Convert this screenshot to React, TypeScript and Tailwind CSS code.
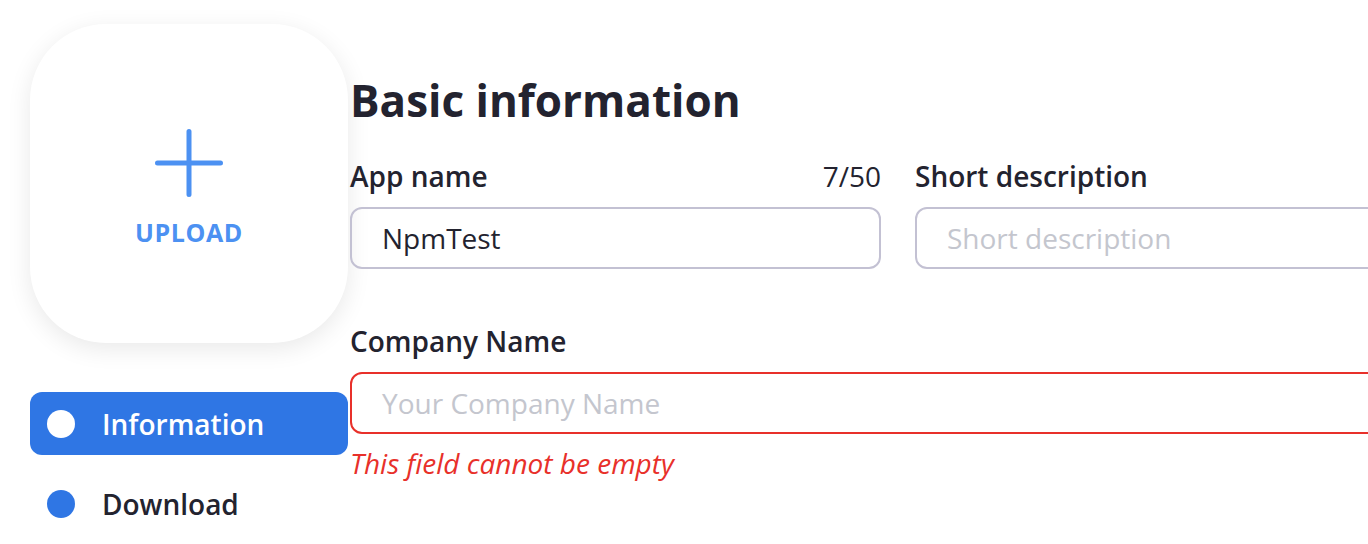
const font = { fontFamily: '"Open Sans", "Noto Sans", sans-serif' };

function PlusIcon() {
  return (
    <svg width="68" height="68" viewBox="0 0 68 68" fill="none" className="text-[#4c91f2]">
      <path d="M34 2.5V65.5M2.5 34H65.5" stroke="currentColor" strokeWidth="5" strokeLinecap="round" />
    </svg>
  );
}

function NavItem({ label, active }: { label: string; active?: boolean }) {
  return (
    <div
      className={
        active
          ? "flex items-center h-[63px] rounded-[12px] bg-[#2f76e4] pl-[17px]"
          : "flex items-center h-[63px] rounded-[12px] pl-[17px]"
      }
    >
      <span
        className={
          active
            ? "w-[28px] h-[28px] rounded-full bg-white shrink-0"
            : "w-[28px] h-[28px] rounded-full bg-[#2f76e4] shrink-0"
        }
      />
      <span
        className={
          active
            ? "ml-[27px] text-[28px] font-semibold text-white"
            : "ml-[27px] text-[28px] font-semibold text-[#23232f]"
        }
      >
        {label}
      </span>
    </div>
  );
}

function Field({
  label,
  value,
  placeholder,
  counter,
  error,
}: {
  label: string;
  value?: string;
  placeholder?: string;
  counter?: string;
  error?: string;
}) {
  return (
    <div className="flex flex-col">
      <div className="flex items-center justify-between leading-[36px] mb-[13px]">
        <span className="text-[28px] font-semibold text-[#23232f]">{label}</span>
        {counter && <span className="text-[28px] text-[#23232f]">{counter}</span>}
      </div>
      <div
        className={
          error
            ? "h-[62px] rounded-[12px] border-2 border-[#e8302a] flex items-center pl-[30px]"
            : "h-[62px] rounded-[12px] border-2 border-[#c3c1d3] flex items-center pl-[30px]"
        }
      >
        {value ? (
          <span className="text-[28px] text-[#23232f]">{value}</span>
        ) : (
          <span className="text-[28px] text-[#c4c6ce]">{placeholder}</span>
        )}
      </div>
      {error && (
        <p className="mt-[11px] text-[28px] italic text-[#e8302a] leading-[36px]">{error}</p>
      )}
    </div>
  );
}

export default function App() {
  return (
    <div className="w-[1368px] h-[544px] overflow-hidden bg-white" style={font}>
      <div className="flex pl-[30px] pt-[24px]">
        {/* Left column */}
        <div className="w-[318px] shrink-0 flex flex-col">
          <div className="h-[319px] rounded-[76px] bg-white shadow-[0_6px_24px_rgba(0,0,0,0.09)] flex flex-col items-center justify-center">
            <div className="mt-[10px]">
              <PlusIcon />
            </div>
            <span className="mt-[18px] text-[25px] leading-[34px] font-bold tracking-[0.6px] text-[#4c91f2]">
              UPLOAD
            </span>
          </div>
          <div className="mt-[49px] flex flex-col gap-[17px]">
            <NavItem label="Information" active />
            <NavItem label="Download" />
          </div>
        </div>

        {/* Main */}
        <div className="ml-[2px] pt-[46px] shrink-0">
          <h1 className="text-[44px] font-bold leading-[60px] text-[#23232f]">Basic information</h1>
          <div className="mt-[28px] grid grid-cols-[531px_531px] gap-x-[34px] gap-y-[54px]">
            <Field label="App name" value="NpmTest" counter="7/50" />
            <Field label="Short description" placeholder="Short description" />
            <div className="col-span-2">
              <Field
                label="Company Name"
                placeholder="Your Company Name"
                error="This field cannot be empty"
              />
            </div>
          </div>
        </div>
      </div>
    </div>
  );
}
